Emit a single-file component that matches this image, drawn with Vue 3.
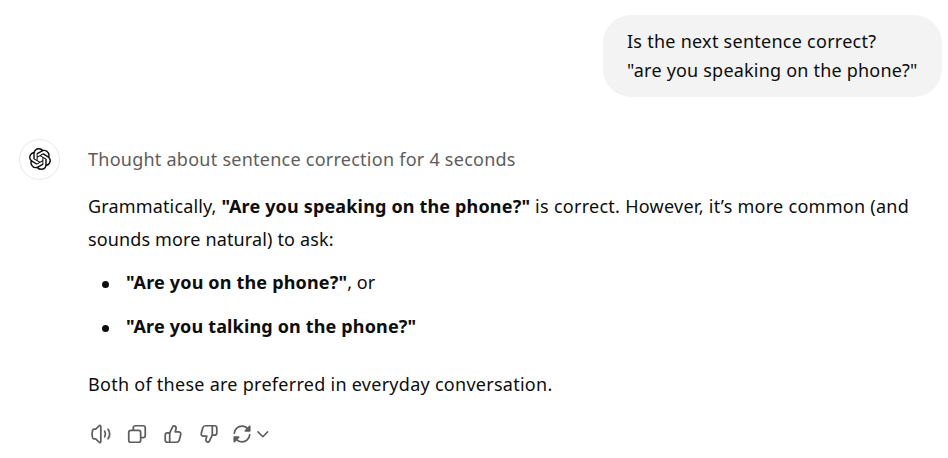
<template>
  <main class="chat">
    <!-- User message -->
    <div class="user-row">
      <div class="bubble">
        <div><span class="q1">Is the next sentence correct?</span></div>
        <div><span class="q2">"are you speaking on the phone?"</span></div>
      </div>
    </div>

    <!-- Assistant message -->
    <div class="answer">
      <div class="avatar">
        <svg width="22" height="22" viewBox="0 0 24 24" fill="#0d0d0d">
          <path d="M22.2819 9.8211a5.9847 5.9847 0 0 0-.5157-4.9108 6.0462 6.0462 0 0 0-6.5098-2.9A6.0651 6.0651 0 0 0 4.9807 4.1818a5.9847 5.9847 0 0 0-3.9977 2.9 6.0462 6.0462 0 0 0 .7427 7.0966 5.98 5.98 0 0 0 .511 4.9107 6.051 6.051 0 0 0 6.5146 2.9001A5.9847 5.9847 0 0 0 13.2599 24a6.0557 6.0557 0 0 0 5.7718-4.2058 5.9894 5.9894 0 0 0 3.9977-2.9001 6.0557 6.0557 0 0 0-.7475-7.0729zm-9.022 12.6081a4.4755 4.4755 0 0 1-2.8764-1.0408l.1419-.0804 4.7783-2.7582a.7948.7948 0 0 0 .3927-.6813v-6.7369l2.02 1.1686a.071.071 0 0 1 .038.052v5.5826a4.504 4.504 0 0 1-4.4945 4.4944zm-9.6607-4.1254a4.4708 4.4708 0 0 1-.5346-3.0137l.142.0852 4.783 2.7582a.7712.7712 0 0 0 .7806 0l5.8428-3.3685v2.3324a.0804.0804 0 0 1-.0332.0615L9.74 19.9502a4.4992 4.4992 0 0 1-6.1408-1.6464zM2.3408 7.8956a4.485 4.485 0 0 1 2.3655-1.9728V11.6a.7664.7664 0 0 0 .3879.6765l5.8144 3.3543-2.0201 1.1685a.0757.0757 0 0 1-.071 0l-4.8303-2.7865A4.504 4.504 0 0 1 2.3408 7.872zm16.5963 3.8558L13.1038 8.364 15.1192 7.2a.0757.0757 0 0 1 .071 0l4.8303 2.7913a4.4944 4.4944 0 0 1-.6765 8.1042v-5.6772a.79.79 0 0 0-.407-.667zm2.0107-3.0231l-.142-.0852-4.7735-2.7818a.7759.7759 0 0 0-.7854 0L9.409 9.2297V6.8974a.0662.0662 0 0 1 .0284-.0615l4.8303-2.7866a4.4992 4.4992 0 0 1 6.6802 4.66zM8.3065 12.863l-2.02-1.1638a.0804.0804 0 0 1-.038-.0567V6.0742a4.4992 4.4992 0 0 1 7.3757-3.4537l-.142.0805L8.704 5.459a.7948.7948 0 0 0-.3927.6813zm1.0976-2.3654l2.602-1.4998 2.6069 1.4998v2.9994l-2.5974 1.4997-2.6067-1.4997Z"/>
        </svg>
      </div>

      <div class="content">
        <div class="thought"><span class="t1">Thought about sentence correction for 4 seconds</span></div>

        <p>
          <span class="a1">Grammatically, </span><strong class="a2">"Are you speaking on the phone?"</strong><span class="a3"> is correct. However, it’s more common (and</span><br>
          <span class="a4">sounds more natural) to ask:</span>
        </p>

        <ul>
          <li><strong class="l1">"Are you on the phone?"</strong><span>, or</span></li>
          <li><strong class="l3">"Are you talking on the phone?"</strong></li>
        </ul>

        <p><span class="b1">Both of these are preferred in everyday conversation.</span></p>

        <!-- Actions -->
        <div class="actions">
          <button v-for="a in actions" :key="a.name" :aria-label="a.name" @click="selected = a.name">
            <svg width="22" height="22" viewBox="0 0 24 24">
              <path v-for="d in a.paths" :key="d" :d="d"/>
            </svg>
          </button>
          <svg class="chevron" width="14" height="24" viewBox="0 0 14 24">
            <path d="M2 9.900l4.800 4.800 4.800-4.800"/>
          </svg>
        </div>
      </div>
    </div>
  </main>
</template>

<script setup>
import { ref } from 'vue'

const selected = ref('')

const actions = [
  {
    name: 'Read aloud',
    paths: [
      'M11.800 3.800v16.400c0 1-1.100 1.400-1.800.8l-3.800-3.700H4.400c-.8 0-1.300-.4-1.600-1.200-.8-2.600-.8-5.600 0-8.200.3-.8.8-1.200 1.600-1.200h1.800L10 3c.7-.6 1.800-.2 1.800.8z',
      'M16 8.900c1.100 2 1.100 4.200 0 6.200',
      'M19.700 6.900c2.200 3.200 2.200 7 0 10.200'
    ]
  },
  {
    name: 'Copy',
    paths: [
      'M5.300 8h8.400c1.300 0 2.300 1 2.300 2.300v8.400c0 1.300-1 2.300-2.300 2.300H5.300c-1.300 0-2.300-1-2.300-2.300v-8.400c0-1.300 1-2.300 2.300-2.300z',
      'M8 7.800V5.300c0-1.300 1-2.300 2.300-2.300h8.400c1.300 0 2.300 1 2.300 2.300v8.400c0 1.300-1 2.300-2.300 2.300h-2.500'
    ]
  },
  {
    name: 'Good response',
    paths: [
      'M8.400 10.800l3.500-7c.3-.6.8-.8 1.400-.6 1.600.4 2.400 1.600 2 3.200l-.9 3.200h3.600c1.900 0 2.900 1.500 2.400 3.200l-1.600 6c-.4 1.400-1.200 2.200-2.700 2.200H5.900c-1.500 0-2.400-.9-2.400-2.400v-5.400c0-1.500.9-2.400 2.400-2.400h2.500z',
      'M8.400 10.800V21'
    ]
  },
  {
    name: 'Bad response',
    paths: [
      'M15.600 13.200l-3.500 7c-.3.6-.8.8-1.400.6-1.600-.4-2.400-1.600-2-3.200l.9-3.200H6c-1.900 0-2.900-1.500-2.400-3.200l1.600-6C5.600 3.800 6.400 3 7.900 3h10.200c1.500 0 2.400.9 2.400 2.400v5.400c0 1.500-.9 2.400-2.400 2.400h-2.500z',
      'M15.600 13.200V3'
    ]
  },
  {
    name: 'Try again',
    paths: [
      'M3.600 11C4.100 6.700 7.700 3.500 12 3.500c3.200 0 6 1.800 7.500 4.500',
      'M20.400 3.800v4.700h-4.700z',
      'M20.400 13c-.5 4.300-4.100 7.500-8.400 7.500-3.200 0-6-1.800-7.500-4.500',
      'M3.600 20.200v-4.700h4.700z'
    ]
  }
]
</script>

<style>
body{
  margin:0;
  background:#fff;
}
</style>

<style scoped>
.chat{
  box-sizing:border-box;
  width:948px;
  height:458px;
  padding:15px 6px 0 19px;
  overflow:hidden;
  font-family:"Noto Sans","Open Sans",sans-serif;
  font-size:18px;
  color:#0d0d0d;
  white-space:nowrap;
}

.user-row{
  display:flex;
  justify-content:flex-end;
}

.bubble{
  box-sizing:border-box;
  width:339px;
  height:82px;
  padding:12px 24px;
  border-radius:28px;
  background:#f3f3f3;
  line-height:29px;
}

.q1{ letter-spacing:0.26px; }
.q2{ letter-spacing:0.2px; }
.t1{ letter-spacing:0.25px; }
.a1{ letter-spacing:0.15px; }
.a2{ letter-spacing:0.16px; }
.a3{ letter-spacing:0.27px; }
.a4{ letter-spacing:0.14px; }
.l1{ letter-spacing:0.17px; }
.l3{ letter-spacing:0.15px; }
.b1{ letter-spacing:0.27px; }

.answer{
  display:flex;
  gap:28px;
  margin-top:42px;
}

.avatar{
  box-sizing:border-box;
  width:41px;
  height:41px;
  border:1px solid #e8e8e8;
  border-radius:50%;
  display:flex;
  align-items:center;
  justify-content:center;
}

.avatar svg{
  margin:-2px 0 0 0;
}

.content{
  flex:1;
  line-height:33px;
}

.thought{
  height:33px;
  padding-top:4px;
  color:#5d5d5d;
}

p{
  margin:14px 0 0;
}

ul{
  margin:10px 0 0;
  padding:0;
  list-style:none;
}

li{
  display:flex;
  align-items:center;
}

li::before{
  content:"";
  width:7px;
  height:7px;
  margin:3px 17px 0 14px;
  border-radius:50%;
  background:#0d0d0d;
}

li + li{
  margin-top:11px;
}

ul + p{
  margin-top:25px;
}

.actions{
  display:flex;
  align-items:center;
  gap:14px;
  margin:21px 0 0 2px;
  height:24px;
}

.actions button{
  display:flex;
  width:22px;
  height:24px;
  padding:0;
  border:none;
  background:none;
  align-items:center;
  justify-content:center;
  cursor:pointer;
}

.actions button:last-of-type{
  margin-left:-3px;
}

.actions svg{
  flex:none;
  fill:none;
  stroke:#5d5d5d;
  stroke-width:1.9;
  stroke-linecap:round;
  stroke-linejoin:round;
}

.actions .chevron{
  margin-left:-11px;
  stroke-width:1.5;
}
</style>
